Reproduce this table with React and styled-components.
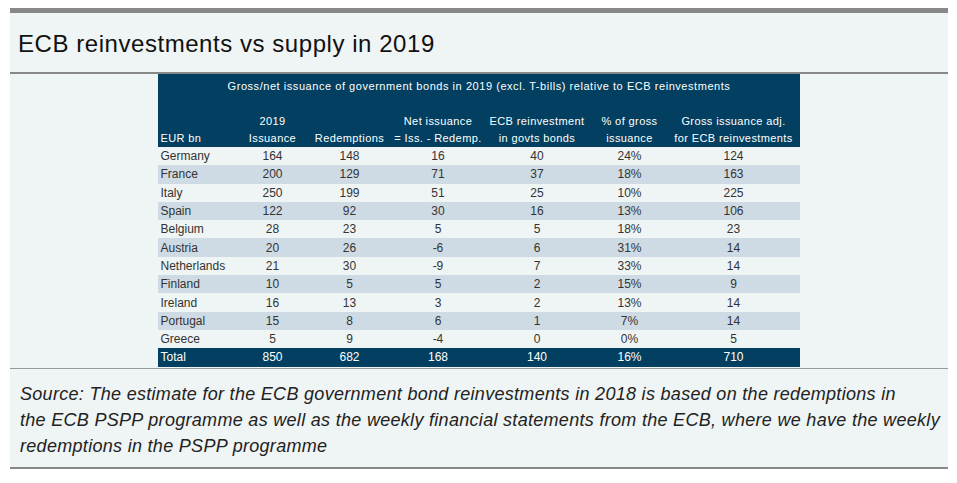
import React from 'react';
import styled, { createGlobalStyle } from 'styled-components';

const Global = createGlobalStyle`
  body {
    margin: 0;
    background: #ffffff;
    font-family: "Liberation Sans", Arial, sans-serif;
  }
`

const Panel = styled.div`
  margin: 8px 0 0 10px;
  width: 938px;
  background: #eff4f4;
  border-top: 5px solid #888888;
  border-bottom: 2px solid #888888;
`

const TitleBar = styled.div`
  height: 61px;
  box-sizing: border-box;
  display: flex;
  align-items: center;
  padding: 2px 0 0 8px;
  font-size: 24px;
  letter-spacing: 0.55px;
  color: #111;
  border-bottom: 2px solid #888888;
`

const TableWrap = styled.div`
  display: flex;
  justify-content: center;
  border-bottom: 1px solid #9a9a9a;
  padding-bottom: 1px;
`

const Table = styled.table`
  width: 641px;
  border-collapse: collapse;
  table-layout: fixed;
  font-size: 12px;
`

const HeadRow = styled.tr`
  background: #023f61;
  color: #ffffff;
`

const Caption = styled.th`
  height: 23px;
  font-size: 11px;
  letter-spacing: 0.55px;
  font-weight: normal;
  text-align: center;
  padding: 0;
  vertical-align: middle;
  white-space: nowrap;
`

const HeadCell = styled.th`
  height: 50px;
  font-size: 11px;
  letter-spacing: 0.4px;
  font-weight: normal;
  line-height: 17px;
  vertical-align: bottom;
  text-align: ${props => props.left ? 'left' : 'center'};
  padding: 0 0 0 ${props => props.left ? '2px' : '0'};
  white-space: nowrap;
`

const Row = styled.tr`
  height: 18.3px;
  background: ${props => props.total ? '#023f61' : props.band ? '#cfdbe4' : 'transparent'};
  color: ${props => props.total ? '#ffffff' : '#333333'};
`

const Cell = styled.td`
  padding: 0 0 0 ${props => props.left ? '2px' : '0'};
  text-align: ${props => props.left ? 'left' : 'center'};
  white-space: nowrap;
  line-height: 18px;
`

const Note = styled.div`
  padding: 12px 10px 8px 10px;
  font-size: 18px;
  letter-spacing: 0.3px;
  font-style: italic;
  line-height: 26px;
  color: #222;
  white-space: nowrap;
`

const widths = [81, 66, 88, 89, 109, 76, 132];

const rows = [
  ['Germany', 164, 148, 16, 40, '24%', 124],
  ['France', 200, 129, 71, 37, '18%', 163],
  ['Italy', 250, 199, 51, 25, '10%', 225],
  ['Spain', 122, 92, 30, 16, '13%', 106],
  ['Belgium', 28, 23, 5, 5, '18%', 23],
  ['Austria', 20, 26, -6, 6, '31%', 14],
  ['Netherlands', 21, 30, -9, 7, '33%', 14],
  ['Finland', 10, 5, 5, 2, '15%', 9],
  ['Ireland', 16, 13, 3, 2, '13%', 14],
  ['Portugal', 15, 8, 6, 1, '7%', 14],
  ['Greece', 5, 9, -4, 0, '0%', 5],
];

const total = ['Total', 850, 682, 168, 140, '16%', 710];

function App() {
  return (
    <>
      <Global />
      <Panel>
        <TitleBar>ECB reinvestments vs supply in 2019</TitleBar>
        <TableWrap>
          <Table>
            <colgroup>
              {widths.map((w, i) => <col key={i} style={{ width: w }} />)}
            </colgroup>
            <thead>
              <HeadRow>
                <Caption colSpan={7}>
                  Gross/net issuance of government bonds in 2019 (excl. T-bills) relative to ECB reinvestments
                </Caption>
              </HeadRow>
              <HeadRow>
                <HeadCell left>EUR bn</HeadCell>
                <HeadCell>2019<br />Issuance</HeadCell>
                <HeadCell>Redemptions</HeadCell>
                <HeadCell>Net issuance<br />= Iss. - Redemp.</HeadCell>
                <HeadCell>ECB reinvestment<br />in govts bonds</HeadCell>
                <HeadCell>% of gross<br />issuance</HeadCell>
                <HeadCell>Gross issuance adj.<br />for ECB reinvestments</HeadCell>
              </HeadRow>
            </thead>
            <tbody>
              {rows.map((r, i) => (
                <Row key={r[0]} band={i % 2 === 1}>
                  {r.map((v, j) => <Cell key={j} left={j === 0}>{v}</Cell>)}
                </Row>
              ))}
              <Row total>
                {total.map((v, j) => <Cell key={j} left={j === 0}>{v}</Cell>)}
              </Row>
            </tbody>
          </Table>
        </TableWrap>
        <Note>
          Source: The estimate for the ECB government bond reinvestments in 2018 is based on the redemptions in<br />
          the ECB PSPP programme as well as the weekly financial statements from the ECB, where we have the weekly<br />
          redemptions in the PSPP programme
        </Note>
      </Panel>
    </>
  );
}

export default App;
